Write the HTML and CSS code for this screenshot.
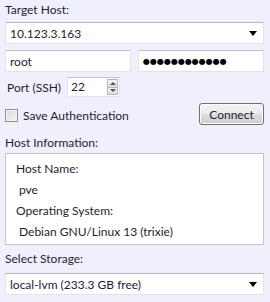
FILE: index.html
```html
<!DOCTYPE html>
<html lang="en">
<head>
    <meta charset="UTF-8">
    <meta name="viewport" content="width=device-width, initial-scale=1.0">
    <title>Connect to Host</title>
    <link rel="stylesheet" href="styles.css">
</head>
<body>
    <div class="panel">
        <div class="label first">Target Host:</div>
        <div class="combo">
            <span class="combo-text">10.123.3.163</span>
            <span class="arrow"></span>
        </div>

        <div class="login-row">
            <div class="field"><span>root</span></div>
            <div class="field"><span class="dots">●●●●●●●●●●●●</span></div>
        </div>

        <div class="port-row">
            <span class="port-label">Port (SSH)</span>
            <div class="spin">
                <span class="spin-value">22</span>
                <div class="spin-buttons">
                    <span class="spin-btn"><span class="tri up"></span></span>
                    <span class="spin-btn"><span class="tri down"></span></span>
                </div>
            </div>
        </div>

        <div class="auth-row">
            <label class="check-label"><span class="checkbox"></span>Save Authentication</label>
            <button class="connect">Connect</button>
        </div>

        <div class="label info-label">Host Information:</div>
        <div class="info-box">
            <div class="info-key">Host Name:</div>
            <div class="info-value">pve</div>
            <div class="info-key">Operating System:</div>
            <div class="info-value">Debian GNU/Linux 13 (trixie)</div>
        </div>

        <div class="label storage-label">Select Storage:</div>
        <div class="combo">
            <span class="combo-text">local-lvm (233.3 GB free)</span>
            <span class="arrow"></span>
        </div>
    </div>
</body>
</html>
```

FILE: styles.css
```css
body {
    margin: 0;
    background-color: #f0f0fc;
    font-family: Lato, "Noto Sans", sans-serif;
    font-size: 12px;
    color: #1e1e32;
}

.panel {
    padding: 2px 6px 0 5px;
}

.label {
    height: 16px;
    line-height: 16px;
}

.label.first {
    margin-bottom: 4px;
}

.info-label {
    margin-top: 10px;
    margin-bottom: 2px;
}

.storage-label {
    margin-top: 6px;
    margin-bottom: 6px;
}

.combo {
    height: 20px;
    background-color: #fff;
    border: 1px solid #e2e3ea;
    border-top-color: #b5b6be;
    display: flex;
    align-items: center;
    justify-content: space-between;
    padding: 0 6px 0 4px;
}

.arrow {
    width: 0;
    height: 0;
    border-left: 4px solid transparent;
    border-right: 4px solid transparent;
    border-top: 5px solid #000;
    margin-top: 1px;
}

.login-row {
    display: flex;
    gap: 7px;
    margin-top: 6px;
}

.field {
    flex: 1;
    height: 20px;
    background-color: #fff;
    border: 1px solid #e2e3ea;
    border-top-color: #c2c3ca;
    display: flex;
    align-items: center;
    padding: 0 4px;
}

.dots {
    font-family: "DejaVu Sans", sans-serif;
    font-size: 8px;
    letter-spacing: 0;
    color: #000;
}

.port-row {
    display: flex;
    align-items: center;
    margin-top: 5px;
    height: 20px;
}

.port-label {
    margin-left: 2px;
    width: 60px;
}

.spin {
    width: 48px;
    height: 18px;
    background-color: #fff;
    border: 1px solid #e2e3ea;
    border-top-color: #c2c3ca;
    display: flex;
    justify-content: space-between;
    padding-left: 3px;
}

.spin-value {
    line-height: 18px;
}

.spin-buttons {
    display: flex;
    flex-direction: column;
    width: 11px;
    padding: 1px;
}

.spin-btn {
    flex: 1;
    background: linear-gradient(#f4f4f4, #dcdde0);
    border: 1px solid #b6b8bd;
    display: flex;
    align-items: center;
    justify-content: center;
}

.spin-btn + .spin-btn {
    border-top: none;
}

.tri {
    width: 0;
    height: 0;
    border-left: 3px solid transparent;
    border-right: 3px solid transparent;
}

.tri.up {
    border-bottom: 3px solid #4d5260;
}

.tri.down {
    border-top: 3px solid #4d5260;
}

.auth-row {
    display: flex;
    align-items: center;
    justify-content: space-between;
    margin-top: 6px;
}

.check-label {
    display: flex;
    align-items: center;
    margin-top: 3px;
}

.checkbox {
    width: 11px;
    height: 11px;
    border: 1px solid #8e8f8f;
    background: linear-gradient(135deg, #d9d9d9, #f6f6f6);
    box-shadow: inset 0 0 0 1px #f4f4f4;
    margin-right: 5px;
}

.connect {
    width: 65px;
    height: 22px;
    font-family: inherit;
    font-size: 12px;
    color: #1e1e32;
    border: 1px solid #707070;
    border-radius: 3px;
    background: linear-gradient(#f2f2f2 0%, #ebebeb 50%, #dddddd 51%, #cfcfcf 100%);
    box-shadow: inset 0 0 0 1px #fcfcfc;
    padding: 0;
}

.info-box {
    height: 86px;
    background-color: #fff;
    border: 1px solid #c4c4c8;
    padding: 4px 0 0 10px;
}

.info-key,
.info-value {
    height: 21px;
    line-height: 21px;
}

.info-value {
    padding-left: 3px;
}
```
